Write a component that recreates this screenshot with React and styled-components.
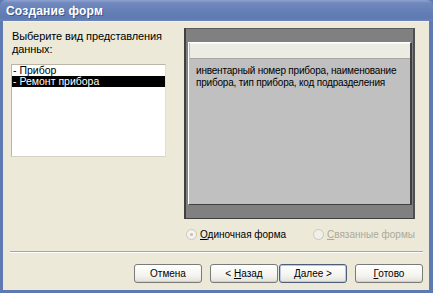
import React, { useState } from "react";
import styled, { createGlobalStyle } from "styled-components";

const GlobalStyle = createGlobalStyle`
  html, body { margin: 0; padding: 0; background: #5f7ab3; }
  body { font-family: "Liberation Sans", Arial, sans-serif; font-size: 11px; color: #000; }
`;

const Window = styled.div`
  width: 433px;
  height: 293px;
  display: flex;
  flex-direction: column;
  overflow: hidden;
`;

const TitleBar = styled.div`
  height: 21px;
  flex: none;
  display: flex;
  align-items: center;
  padding-left: 6px;
  background: linear-gradient(#8ea3cf 0px, #7088bd 3px, #6680b8 10px, #5f79b2 18px, #6a83b8 21px);
  border-radius: 6px 6px 0 0;
  color: #fff;
  font-weight: bold;
  font-size: 12px;
  letter-spacing: 0.2px;
  text-shadow: 1px 1px 0 #3d5585;
`;

const Body = styled.div`
  flex: 1;
  display: flex;
  flex-direction: column;
  background: #ece9d8;
  margin: 0 4px 3px 3px;
  padding: 6px 0 0 8px;
  border-top: 1px solid #f4f3ec;
`;

const Content = styled.div`
  display: flex;
  gap: 18px;
`;

const LeftColumn = styled.div`
  width: 155px;
  display: flex;
  flex-direction: column;
`;

const Prompt = styled.div`
  padding: 2px 0 0 1px;
  line-height: 13px;
  height: 34px;
  letter-spacing: -0.1px;
`;

const ListBox = styled.div`
  height: 91px;
  background: #fff;
  border: 1px solid #b9b6a8;
  border-right-color: #e0ded3;
  border-bottom-color: #d6d3c6;
  font-size: 10.5px;
`;

const ListItem = styled.div`
  height: 11px;
  line-height: 11px;
  padding-left: 1px;
  white-space: nowrap;
  background: ${(p) => (p.$selected ? "#000" : "transparent")};
  color: ${(p) => (p.$selected ? "#fff" : "#000")};
  cursor: default;
`;

const RightColumn = styled.div`
  width: 231px;
  display: flex;
  flex-direction: column;
`;

const Preview = styled.div`
  height: 191px;
  box-sizing: border-box;
  background: #808080;
  border-left: 2px solid #404040;
  border-top: 1px solid #5a5a5a;
  border-right: 2px solid #505050;
  border-bottom: 1px solid #404040;
  padding: 13px 1px 13px 2px;
  display: flex;
`;

const PreviewInner = styled.div`
  flex: 1;
  background: #c0c0c0;
  border-left: 1px solid #ffffff;
  border-top: 1px solid #ffffff;
  border-right: 2px solid #404040;
  border-bottom: 1px solid #404040;
  display: flex;
  flex-direction: column;
  min-width: 0;
`;

const HeaderStrip = styled.div`
  height: 14px;
  margin: 0 0 0 1px;
  background: #ecebe4;
  border-top: 1px solid #f8f8f4;
  border-bottom: 1px solid #a8a8a0;
`;

const FieldText = styled.div`
  padding: 6px 0 0 7px;
  line-height: 12px;
  font-size: 10px;
  letter-spacing: -0.2px;
  white-space: nowrap;
`;

const RadioRow = styled.div`
  display: flex;
  align-items: center;
  height: 13px;
  margin-top: 9px;
  padding-left: 2px;
  font-size: 10px;
`;

const RadioLabel = styled.label`
  display: flex;
  align-items: center;
  gap: 3px;
  width: ${(p) => (p.$disabled ? "auto" : "127px")};
  white-space: nowrap;
  color: ${(p) => (p.$disabled ? "#aca899" : "#000")};
`;

const RadioCircle = styled.span`
  width: 11px;
  height: 11px;
  box-sizing: border-box;
  border-radius: 50%;
  border: 1px solid #cac8bb;
  background: ${(p) => (p.$disabled ? "#f0efe8" : "#f4f3ee")};
  display: flex;
  align-items: center;
  justify-content: center;
  &::after {
    content: "";
    width: 3px;
    height: 3px;
    border-radius: 50%;
    background: ${(p) => (p.$checked ? "#c4c1b3" : "transparent")};
  }
`;

const Separator = styled.div`
  margin: 10px 6px 0 -1px;
  height: 0;
  border-top: 1px solid #aca899;
  border-bottom: 1px solid #ffffff;
`;

const ButtonRow = styled.div`
  display: flex;
  justify-content: flex-end;
  margin: 11px 6px 0 0;
`;

const Button = styled.button`
  width: 68px;
  height: 19px;
  margin-left: ${(p) => p.$gap}px;
  padding: 0;
  font-family: inherit;
  font-size: 10px;
  color: #000;
  border-radius: 3px;
  border: 1px solid ${(p) => (p.$default ? "#4f5d7c" : "#7a7a7a")};
  box-shadow: ${(p) =>
    p.$default
      ? "inset 0 0 0 1px #b8c8e8"
      : "inset 0 -1px 0 #d6d0c5"};
  background: linear-gradient(#ffffff, #f5f4ef 60%, #e3e1d6);
  cursor: default;
`;

const U = styled.span`
  text-decoration: underline;
`;

export default function App() {
  const [selected, setSelected] = useState(1);
  const items = ["- Прибор", "- Ремонт прибора"];
  return (
    <>
      <GlobalStyle />
      <Window>
        <TitleBar>Создание форм</TitleBar>
        <Body>
          <Content>
            <LeftColumn>
              <Prompt>
                Выберите вид представления
                <br />
                данных:
              </Prompt>
              <ListBox>
                {items.map((item, i) => (
                  <ListItem
                    key={item}
                    $selected={i === selected}
                    onClick={() => setSelected(i)}
                  >
                    {item}
                  </ListItem>
                ))}
              </ListBox>
            </LeftColumn>
            <RightColumn>
              <Preview>
                <PreviewInner>
                  <HeaderStrip />
                  <FieldText>
                    инвентарный номер прибора, наименование
                    <br />
                    прибора, тип прибора, код подразделения
                  </FieldText>
                </PreviewInner>
              </Preview>
              <RadioRow>
                <RadioLabel>
                  <RadioCircle $checked />
                  <span>
                    <U>О</U>диночная форма
                  </span>
                </RadioLabel>
                <RadioLabel $disabled>
                  <RadioCircle $disabled />
                  <span>
                    <U>С</U>вязанные формы
                  </span>
                </RadioLabel>
              </RadioRow>
            </RightColumn>
          </Content>
          <Separator />
          <ButtonRow>
            <Button $gap={0}>Отмена</Button>
            <Button $gap={8}>
              &lt; <U>Н</U>азад
            </Button>
            <Button $gap={1} $default>
              <U>Д</U>алее &gt;
            </Button>
            <Button $gap={8}>
              <U>Г</U>отово
            </Button>
          </ButtonRow>
        </Body>
      </Window>
    </>
  );
}
